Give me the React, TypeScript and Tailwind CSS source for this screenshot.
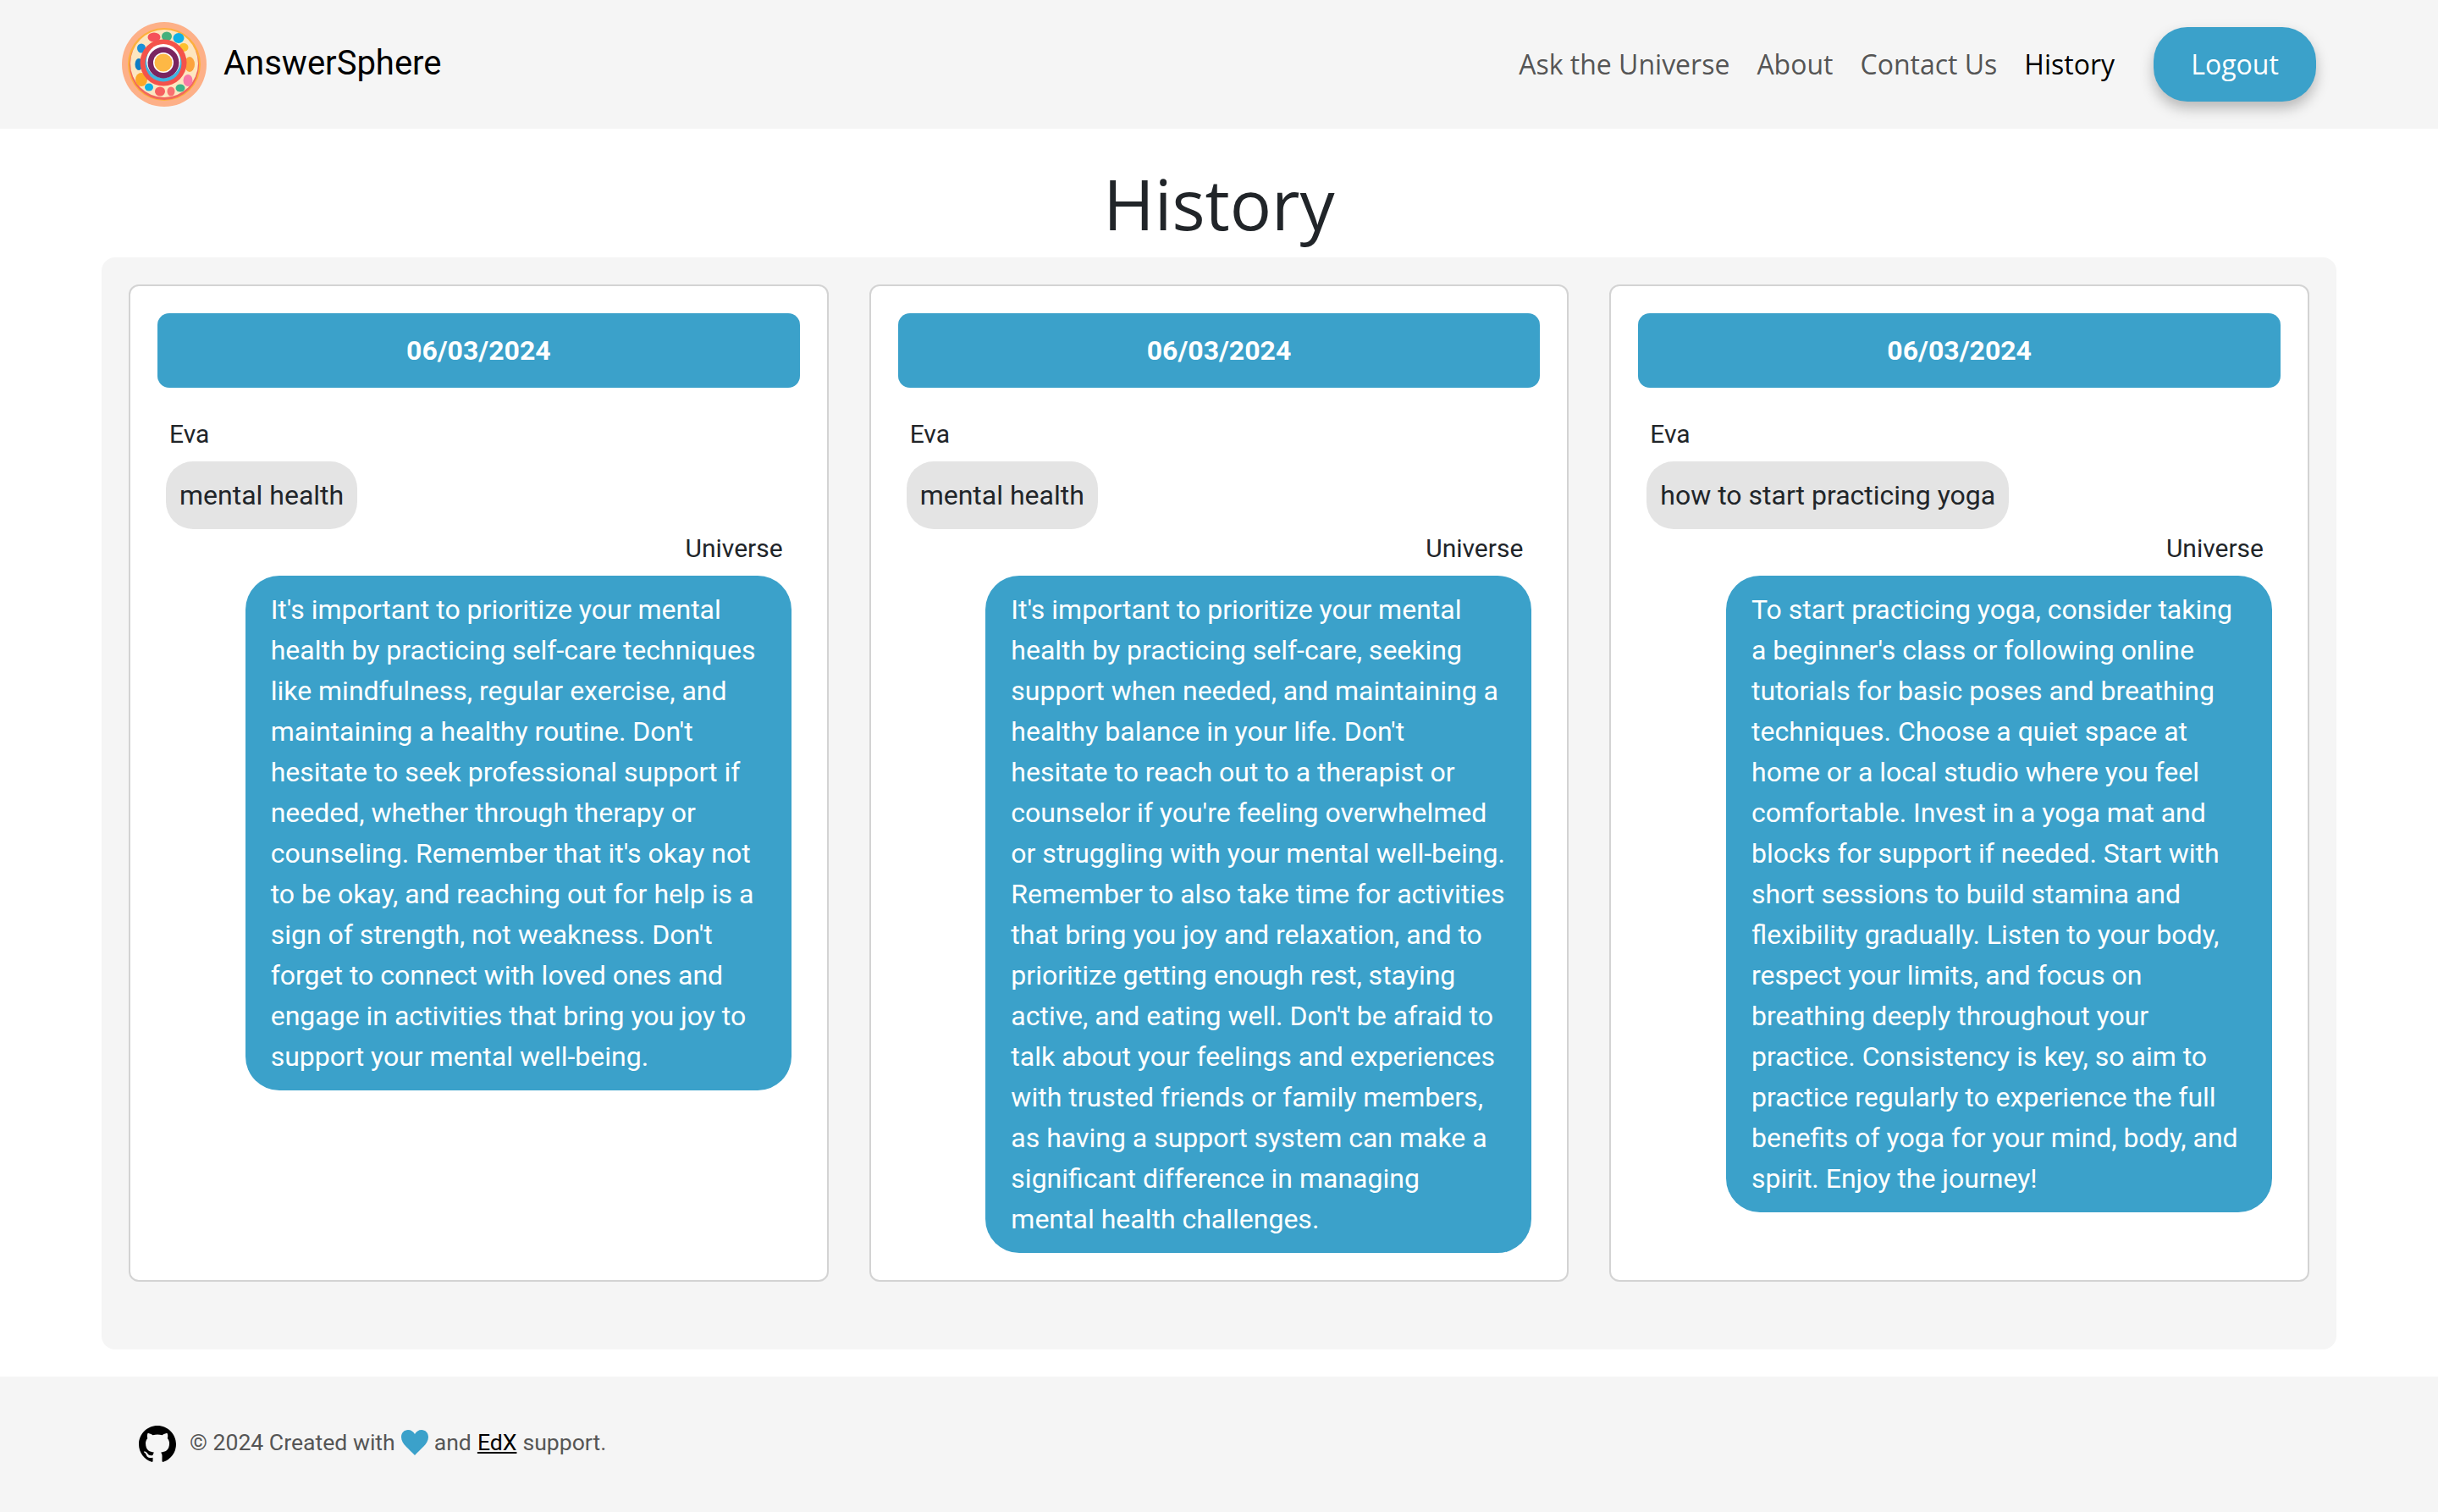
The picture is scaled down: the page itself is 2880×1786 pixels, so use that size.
const chats = [
	{
		question: "mental health",
		answer:
			"It's important to prioritize your mental health by practicing self-care techniques like mindfulness, regular exercise, and maintaining a healthy routine. Don't hesitate to seek professional support if needed, whether through therapy or counseling. Remember that it's okay not to be okay, and reaching out for help is a sign of strength, not weakness. Don't forget to connect with loved ones and engage in activities that bring you joy to support your mental well-being.",
	},
	{
		question: "mental health",
		answer:
			"It's important to prioritize your mental health by practicing self-care, seeking support when needed, and maintaining a healthy balance in your life. Don't hesitate to reach out to a therapist or counselor if you're feeling overwhelmed or struggling with your mental well-being. Remember to also take time for activities that bring you joy and relaxation, and to prioritize getting enough rest, staying active, and eating well. Don't be afraid to talk about your feelings and experiences with trusted friends or family members, as having a support system can make a significant difference in managing mental health challenges.",
	},
	{
		question: "how to start practicing yoga",
		answer:
			"To start practicing yoga, consider taking a beginner's class or following online tutorials for basic poses and breathing techniques. Choose a quiet space at home or a local studio where you feel comfortable. Invest in a yoga mat and blocks for support if needed. Start with short sessions to build stamina and flexibility gradually. Listen to your body, respect your limits, and focus on breathing deeply throughout your practice. Consistency is key, so aim to practice regularly to experience the full benefits of yoga for your mind, body, and spirit. Enjoy the journey!",
	},
];

function Logo() {
	return (
		<svg viewBox="0 0 100 100" className="h-[100px] w-[100px] shrink-0">
			<circle cx="50" cy="50" r="50" fill="#fdb088" />
			<circle cx="50" cy="50" r="43" fill="#fdb03c" />
			<circle cx="50" cy="51" r="41" fill="#f2685c" />
			<circle cx="50" cy="49" r="40" fill="#fde6c0" />
			<ellipse cx="38" cy="18" rx="7.500" ry="5.500" fill="#f5515a" />
			<ellipse cx="53" cy="17" rx="6" ry="5.500" fill="#45b07c" />
			<ellipse cx="67" cy="19" rx="6.500" ry="6" fill="#10b0e4" />
			<ellipse cx="73" cy="30" rx="5.500" ry="5" fill="#fcc02e" />
			<ellipse cx="23" cy="31" rx="5" ry="5.500" fill="#1a90d8" />
			<ellipse cx="20" cy="50" rx="4.500" ry="7" fill="#0e7cc4" />
			<ellipse cx="80" cy="50" rx="6" ry="9" fill="#fca33c" />
			<ellipse cx="23" cy="68" rx="7" ry="8" fill="#fca828" />
			<ellipse cx="78" cy="69" rx="5.500" ry="7" fill="#f77aa8" />
			<ellipse cx="32" cy="77" rx="5" ry="4.500" fill="#10b0e4" />
			<ellipse cx="45" cy="82" rx="6" ry="5.500" fill="#f65f5f" />
			<ellipse cx="58" cy="82" rx="4.500" ry="5.500" fill="#f87070" />
			<ellipse cx="69" cy="78" rx="5.500" ry="4.500" fill="#3cb388" />
			<circle cx="49" cy="48" r="27.500" fill="#f4524a" />
			<circle cx="49" cy="49" r="21.500" fill="#3fb4e0" />
			<circle cx="49" cy="46" r="20" fill="#ffffff" />
			<circle cx="49" cy="48" r="18.500" fill="#7a2560" />
			<circle cx="49" cy="48" r="12" fill="#ffffff" />
			<circle cx="49" cy="48" r="10.500" fill="#fdb845" />
		</svg>
	);
}

export default function App() {
	return (
		<div className="min-h-[1786px] bg-white font-['Roboto',sans-serif] text-[32px] leading-[48px] text-[#212529]">
			<header className="flex h-[152px] items-center justify-between bg-[#f5f5f5] pr-[144px] pl-[144px]">
				<div className="flex items-center gap-[20px] text-[40px] leading-[60px] text-black">
					<Logo />
					<span className="mb-[3px]">AnswerSphere</span>
				</div>
				<nav className="flex items-center font-['Open_Sans',sans-serif] text-[#555555]">
					<a className="px-4">Ask the Universe</a>
					<a className="px-4">About</a>
					<a className="px-4">Contact Us</a>
					<a className="px-4 text-black">History</a>
					<button className="ml-[30px] h-[88px] w-[192px] rounded-[40px] bg-[#3ba1ca] text-white shadow-[0_8px_16px_rgba(0,0,0,0.25)]">
						Logout
					</button>
				</nav>
			</header>

			<h1 className="pt-[44px] pb-[20px] text-center font-['Open_Sans',sans-serif] text-[82px] leading-[88px] font-normal">
				History
			</h1>

			<main className="mx-[120px] mb-[32px] grid grid-cols-3 items-stretch gap-[48px] rounded-[16px] bg-[#f5f5f5] px-[32px] pt-[32px] pb-[80px]">
				{chats.map((chat, i) => (
					<section
						key={i}
						className="rounded-[12px] border-2 border-[#d3d3d3] bg-white p-[32px]"
					>
						<div className="flex h-[88px] items-center justify-center rounded-[14px] bg-[#3ba1ca] font-bold text-white">
							06/03/2024
						</div>
						<div className="mt-[34px] pl-[14px] text-[30px] leading-[42px]">
							Eva
						</div>
						<div className="mt-[11px] ml-[10px] w-fit rounded-[32px] bg-[#e4e4e4] px-4 py-4">
							{chat.question}
						</div>
						<div className="mt-[2px] pr-[20px] text-right text-[30px] leading-[42px]">
							Universe
						</div>
						<div className="mt-[11px] mr-[10px] ml-auto w-[645px] rounded-[40px] bg-[#3ba1ca] px-[30px] py-4 text-white">
							{chat.answer}
						</div>
					</section>
				))}
			</main>

			<footer className="flex h-[160px] items-center bg-[#f5f5f5] pl-[164px] text-[26.6px] text-[#555555]">
				<svg viewBox="0 0 16 16" className="h-[44px] w-[44px] text-black" fill="currentColor">
					<path d="M8 0C3.58 0 0 3.58 0 8c0 3.54 2.29 6.53 5.47 7.59.4.07.55-.17.55-.38 0-.19-.01-.82-.01-1.49-2.01.37-2.53-.49-2.69-.94-.09-.23-.48-.94-.82-1.13-.28-.15-.68-.52-.01-.53.63-.01 1.08.58 1.23.82.72 1.21 1.87.87 2.33.66.07-.52.28-.87.51-1.07-1.78-.2-3.64-.89-3.64-3.95 0-.87.31-1.59.82-2.15-.08-.2-.36-1.02.08-2.12 0 0 .67-.21 2.2.82.64-.18 1.32-.27 2-.27.68 0 1.36.09 2 .27 1.53-1.04 2.2-.82 2.2-.82.44 1.1.16 1.92.08 2.12.51.56.82 1.27.82 2.15 0 3.07-1.87 3.75-3.65 3.95.29.25.54.73.54 1.48 0 1.07-.01 1.93-.01 2.2 0 .21.15.46.55.38A8.013 8.013 0 0016 8c0-4.42-3.58-8-8-8z" />
				</svg>
				<div className="mb-[4px] flex items-center">
					<span className="ml-[16px]">© 2024 Created with</span>
					<svg viewBox="0 0 32 30" className="mx-[7px] h-[30px] w-[32px]">
						<path
							d="M16 30C10 23 0 17 0 8.500C0 3.500 3.500 0 8 0C11.500 0 14.500 2 16 5C17.500 2 20.500 0 24 0C28.500 0 32 3.500 32 8.500C32 17 22 23 16 30Z"
							fill="#3ba1ca"
						/>
					</svg>
					<span>and</span>
					<a className="ml-[7px] text-black underline">EdX</a>
					<span className="ml-[7px]">support.</span>
				</div>
			</footer>
		</div>
	);
}
